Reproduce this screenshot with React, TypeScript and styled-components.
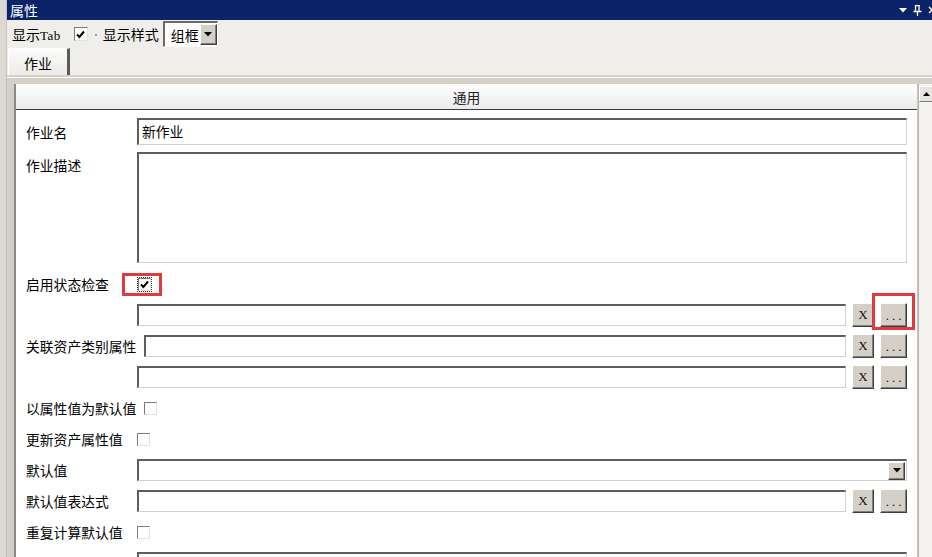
import React from "react";
import styled, { createGlobalStyle } from "styled-components";

const cjk = `"Noto Sans CJK SC", "Noto Sans", sans-serif`;

const GlobalStyle = createGlobalStyle`
  html, body {
    margin: 0;
    padding: 0;
    background: #d4d0c8;
  }
  body {
    font-family: ${cjk};
  }
`;

const Window = styled.div`
  width: 932px;
  height: 557px;
  overflow: hidden;
  display: flex;
  background: #d4d0c8;
  box-sizing: border-box;
`;

const Gutter = styled.div`
  width: 7px;
  flex: none;
  background: #dcd9d2;
  border-right: 1px solid #c4c1ba;
  box-sizing: border-box;
`;

const Main = styled.div`
  flex: 1;
  display: flex;
  flex-direction: column;
  min-width: 0;
`;

const TitleBar = styled.div`
  height: 20px;
  flex: none;
  background: #0b2369;
  color: #fff;
  display: flex;
  align-items: center;
  padding-left: 3px;
  font-size: 14px;
  line-height: 20px;
`;

const TitleText = styled.span`
  flex: 1;
`;

const TitleIcons = styled.div`
  display: flex;
  align-items: center;
  gap: 6px;
  margin-right: -4px;
`;

const Toolbar = styled.div`
  height: 28px;
  flex: none;
  display: flex;
  align-items: center;
  padding-left: 5px;
  background: #efeeea;
  font-size: 14px;
  color: #000;
`;

const ToolLabel = styled.span`
  white-space: nowrap;
`;

const Latin = styled.span`
  font-family: "Liberation Serif", serif;
  font-size: 13px;
  letter-spacing: 0.5px;
`;

const Dot = styled.span`
  width: 2px;
  height: 2px;
  background: #9a9a9a;
  margin: 2px 6px 0 7px;
`;

const Combo = styled.div`
  margin-left: 4px;
  width: 55px;
  height: 26px;
  box-sizing: border-box;
  display: flex;
  align-items: center;
  background: #fff;
  border-top: 2px solid #6a6a6a;
  border-left: 2px solid #6a6a6a;
  border-right: 1px solid #fff;
  border-bottom: 1px solid #fff;
  overflow: hidden;
`;

const ComboText = styled.span`
  flex: 1;
  overflow: hidden;
  white-space: nowrap;
  padding-left: 6px;
  width: 26px;
  font-size: 14px;
`;

const DropButton = styled.div<{ $h: number }>`
  width: 17px;
  height: ${(p) => p.$h}px;
  flex: none;
  box-sizing: border-box;
  background: #d4d0c8;
  border-top: 1px solid #fff;
  border-left: 1px solid #fff;
  border-right: 1px solid #404040;
  border-bottom: 1px solid #404040;
  box-shadow: inset -1px -1px 0 #808080;
  display: flex;
  align-items: center;
  justify-content: center;
`;

const TabStrip = styled.div`
  height: 27px;
  flex: none;
  display: flex;
  align-items: flex-end;
  background: #efeeea;
  border-bottom: 2px solid #d4d0c8;
`;

const Tab = styled.div`
  width: 62px;
  height: 27px;
  margin-left: 1px;
  box-sizing: border-box;
  background: linear-gradient(#fbfbf9, #ecebe6);
  border-top: 1px solid #fff;
  border-left: 1px solid #fff;
  border-right: 3px solid #5a5a5a;
  display: flex;
  align-items: center;
  justify-content: center;
  font-size: 14px;
  padding-top: 1px;
`;

const Body = styled.div`
  flex: 1;
  display: flex;
  min-height: 0;
  background: #d4d0c8;
  border-top: 1px solid #fff;
  padding: 6px 0 0 7px;
`;

const Group = styled.div`
  flex: 1;
  display: flex;
  flex-direction: column;
  min-width: 0;
  background: #fff;
  border-left: 2px solid #8a8a8a;
  border-right: 1px solid #c8c5be;
`;

const GroupHeader = styled.div`
  height: 25px;
  flex: none;
  background: linear-gradient(#ffffff, #ebebeb);
  border-bottom: 1px solid #3c3c3c;
  display: flex;
  align-items: center;
  justify-content: center;
  font-size: 13.8px;
  color: #222;
`;

const Content = styled.div`
  padding: 8px 10px 0 10px;
  display: flex;
  flex-direction: column;
`;

const Row = styled.div<{ $h: number; $gap: number; $top?: boolean }>`
  display: flex;
  align-items: ${(p) => (p.$top ? "flex-start" : "center")};
  height: ${(p) => p.$h}px;
  margin-bottom: ${(p) => p.$gap}px;
  flex: none;
`;

const Label = styled.span<{ $pt?: number }>`
  min-width: 103px;
  margin-right: 8px;
  white-space: nowrap;
  font-size: 13.8px;
  color: #000;
  padding-top: ${(p) => p.$pt ?? 0}px;
`;

const Spacer = styled.span`
  width: 111px;
  flex: none;
`;

const TextBox = styled.div<{ $h: number }>`
  flex: 1;
  height: ${(p) => p.$h}px;
  box-sizing: border-box;
  background: #fff;
  border-top: 2px solid #5e5e5e;
  border-left: 2px solid #5e5e5e;
  border-right: 1px solid #d4d0c8;
  border-bottom: 1px solid #d4d0c8;
  font-size: 13.8px;
  padding: 1px 0 0 3px;
  display: flex;
  align-items: flex-start;
  justify-content: space-between;
`;

const SideButton = styled.div<{ $w: number }>`
  width: ${(p) => p.$w}px;
  height: 24px;
  flex: none;
  box-sizing: border-box;
  background: #d4d0c8;
  border-top: 1px solid #fff;
  border-left: 1px solid #fff;
  border-right: 1px solid #404040;
  border-bottom: 1px solid #404040;
  box-shadow: inset -1px -1px 0 #808080;
  display: flex;
  align-items: center;
  justify-content: center;
  font-family: "Liberation Serif", serif;
  font-size: 13px;
  color: #111;
`;

const Dots = styled.span`
  letter-spacing: 3px;
  margin-right: -3px;
  padding-top: 2px;
`;

const ButtonSlot = styled.div`
  display: flex;
  margin-left: 6px;
`;

const Highlight = styled.span<{ $p: string; $m: string }>`
  display: inline-flex;
  border: 3px solid #e03a3e;
  padding: ${(p) => p.$p};
  margin: ${(p) => p.$m};
`;

const Check = styled.span<{ $focus?: boolean; $size?: number }>`
  width: ${(p) => p.$size ?? 13}px;
  height: ${(p) => p.$size ?? 13}px;
  flex: none;
  box-sizing: border-box;
  background: #fff;
  border-top: 1px solid #7a7a7a;
  border-left: 1px solid #7a7a7a;
  border-right: 1px solid #e4e2dc;
  border-bottom: 1px solid #e4e2dc;
  outline: ${(p) => (p.$focus ? "1px dotted #333" : "none")};
  outline-offset: 0px;
  display: flex;
  align-items: center;
  justify-content: center;
`;

const ToolCheck = styled(Check)`
  margin-left: 13px;
`;

const ScrollBar = styled.div`
  width: 13px;
  flex: none;
  background: #f4f3ef;
  border-left: 1px solid #b8b5ae;
  display: flex;
  flex-direction: column;
`;

const ScrollArrow = styled.div`
  height: 16px;
  margin-top: 2px;
  box-sizing: border-box;
  background: #e6e4de;
  border-top: 1px solid #fff;
  border-left: 1px solid #fff;
  border-bottom: 1px solid #7a7a7a;
  display: flex;
  align-items: center;
  justify-content: center;
`;

const ComboBox = styled(TextBox)`
  padding: 0 1px 0 0;
  align-items: center;
  justify-content: flex-end;
`;

const CheckMark: React.FC = () => (
  <svg width="9" height="9" viewBox="0 0 9 9">
    <path d="M1 4.5 L3.4 7 L8 1.5" fill="none" stroke="#000" strokeWidth="2" />
  </svg>
);

const DownTriangle: React.FC<{ color?: string }> = ({ color = "#000" }) => (
  <svg width="8" height="5" viewBox="0 0 8 5">
    <path d="M0 0 H8 L4 4.5 Z" fill={color} />
  </svg>
);

const PinIcon: React.FC = () => (
  <svg width="9" height="11" viewBox="0 0 9 11">
    <path d="M2 0.5 H7 M2.5 0.5 V6 M6 0.5 V6 M0.5 6.5 H8.5 M4.5 6.5 V11" fill="none" stroke="#fff" strokeWidth="1.3" />
  </svg>
);

const CloseIcon: React.FC = () => (
  <svg width="8" height="8" viewBox="0 0 8 8">
    <path d="M1 1 L7 7 M7 1 L1 7" stroke="#fff" strokeWidth="1.4" />
  </svg>
);

const PickButtons: React.FC<{ marked?: boolean }> = ({ marked }) => (
  <ButtonSlot>
    <SideButton $w={22}>X</SideButton>
    {marked ? (
      <Highlight $p="7px 5px 0 5px" $m="-10px -8px -3px -2px">
        <SideButton $w={27}>
          <Dots>...</Dots>
        </SideButton>
      </Highlight>
    ) : (
      <ButtonSlot>
        <SideButton $w={27}>
          <Dots>...</Dots>
        </SideButton>
      </ButtonSlot>
    )}
  </ButtonSlot>
);

const App: React.FC = () => {
  return (
    <>
      <GlobalStyle />
      <Window>
        <Gutter />
        <Main>
          <TitleBar>
            <TitleText>属性</TitleText>
            <TitleIcons>
              <DownTriangle color="#fff" />
              <PinIcon />
              <CloseIcon />
            </TitleIcons>
          </TitleBar>

          <Toolbar>
            <ToolLabel>
              显示<Latin>Tab</Latin>
            </ToolLabel>
            <ToolCheck $size={14}>
              <CheckMark />
            </ToolCheck>
            <Dot />
            <ToolLabel>显示样式</ToolLabel>
            <Combo>
              <ComboText>组框</ComboText>
              <DropButton $h={21}>
                <DownTriangle />
              </DropButton>
            </Combo>
          </Toolbar>

          <TabStrip>
            <Tab>作业</Tab>
          </TabStrip>

          <Body>
            <Group>
              <GroupHeader>通用</GroupHeader>
              <Content>
                <Row $h={27} $gap={7}>
                  <Label>作业名</Label>
                  <TextBox $h={27}>新作业</TextBox>
                </Row>
                <Row $h={111} $gap={10} $top>
                  <Label $pt={3}>作业描述</Label>
                  <TextBox $h={111} />
                </Row>
                <Row $h={22} $gap={9}>
                  <Label>启用状态检查</Label>
                  <Highlight $p="2px 8px 2px 13px" $m="0 0 0 -15px">
                    <Check $focus>
                      <CheckMark />
                    </Check>
                  </Highlight>
                </Row>
                <Row $h={22} $gap={9}>
                  <Spacer />
                  <TextBox $h={22} />
                  <PickButtons marked />
                </Row>
                <Row $h={22} $gap={9}>
                  <Label>关联资产类别属性</Label>
                  <TextBox $h={22} />
                  <PickButtons />
                </Row>
                <Row $h={22} $gap={9}>
                  <Spacer />
                  <TextBox $h={22} />
                  <PickButtons />
                </Row>
                <Row $h={22} $gap={9}>
                  <Label>以属性值为默认值</Label>
                  <Check />
                </Row>
                <Row $h={22} $gap={9}>
                  <Label>更新资产属性值</Label>
                  <Check />
                </Row>
                <Row $h={22} $gap={9}>
                  <Label>默认值</Label>
                  <ComboBox $h={22}>
                    <DropButton $h={18}>
                      <DownTriangle />
                    </DropButton>
                  </ComboBox>
                </Row>
                <Row $h={22} $gap={9}>
                  <Label>默认值表达式</Label>
                  <TextBox $h={22} />
                  <PickButtons />
                </Row>
                <Row $h={22} $gap={9}>
                  <Label>重复计算默认值</Label>
                  <Check />
                </Row>
                <Row $h={22} $gap={9}>
                  <Spacer />
                  <TextBox $h={22} />
                </Row>
              </Content>
            </Group>
            <ScrollBar>
              <ScrollArrow>
                <svg width="7" height="4" viewBox="0 0 7 4">
                  <path d="M0 4 H7 L3.5 0 Z" fill="#000" />
                </svg>
              </ScrollArrow>
            </ScrollBar>
          </Body>
        </Main>
      </Window>
    </>
  );
};

export default App;
